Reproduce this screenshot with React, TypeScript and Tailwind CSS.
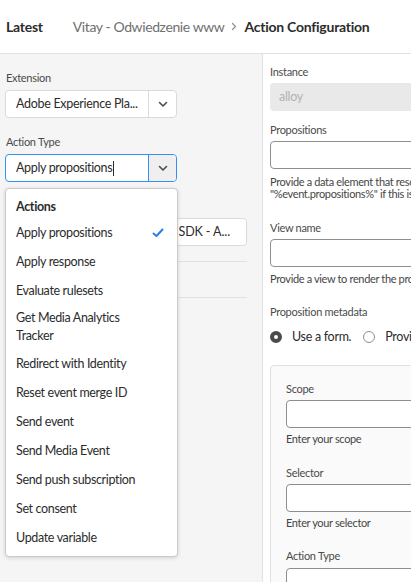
import React from "react";

const Chevron = () => (
  <svg width="10" height="7" viewBox="0 0 10 7" fill="none">
    <path d="M1.5 1.5 L5 5 L8.5 1.5" stroke="#4b4b4b" strokeWidth="1.6" strokeLinecap="round" strokeLinejoin="round" />
  </svg>
);

const Label = ({ children, className = "" }: { children: React.ReactNode; className?: string }) => (
  <div className={`text-[11px] leading-[16px] tracking-[-0.3px] text-[#4b4b4b] ${className}`}>{children}</div>
);

const Help = ({ children, className = "" }: { children: React.ReactNode; className?: string }) => (
  <div className={`text-[11px] leading-[12px] tracking-[-0.35px] text-[#464646] whitespace-nowrap ${className}`}>{children}</div>
);

const items = [
  "Apply propositions",
  "Apply response",
  "Evaluate rulesets",
  "Get Media Analytics Tracker",
  "Redirect with Identity",
  "Reset event merge ID",
  "Send event",
  "Send Media Event",
  "Send push subscription",
  "Set consent",
  "Update variable",
];

export default function App() {
  return (
    <div className="w-[411px] h-[582px] overflow-hidden bg-white font-['Lato','Noto_Sans',sans-serif] text-[#2c2c2c]">
      {/* Header */}
      <div className="h-[54px] border-b border-[#e1e1e1] flex items-center pl-[6px] whitespace-nowrap text-[14px]">
        <span className="font-bold tracking-[-0.25px] text-[#2c2c2c]">Latest</span>
        <span className="ml-[30px] tracking-[-0.4px] text-[#707070]">Vitay - Odwiedzenie www</span>
        <svg className="ml-[7px]" width="6" height="9" viewBox="0 0 6 9" fill="none">
          <path d="M1.5 1.5 L4.5 4.5 L1.5 7.5" stroke="#8e8e8e" strokeWidth="1.2" strokeLinecap="round" strokeLinejoin="round" />
        </svg>
        <span className="ml-[7px] font-bold tracking-[-0.25px] text-[#2c2c2c]">Action Configuration</span>
      </div>

      <div className="flex h-[528px]">
        {/* Left column */}
        <div className="relative w-[263px] shrink-0 bg-[#f5f5f5] border-r border-[#e1e1e1] pl-[5px] pr-[15px] pt-[16px]">
          <Label className="pl-[1px]">Extension</Label>
          <div className="mt-[4px] flex h-[28px] w-[172px] rounded-[4px] border border-[#dadada] bg-white">
            <div className="flex-1 flex items-center pl-[10px] text-[12.5px] tracking-[-0.3px] whitespace-nowrap overflow-hidden">
              Adobe Experience Pla...
            </div>
            <div className="w-[28px] flex items-center justify-center border-l border-[#dadada]">
              <Chevron />
            </div>
          </div>

          <Label className="mt-[16px] pl-[1px]">Action Type</Label>
          <div className="mt-[4px] flex h-[28px] w-[172px] rounded-[4px] border border-[#378ef0] bg-white overflow-hidden">
            <div className="flex-1 flex items-center pl-[10px] text-[12.5px] tracking-[-0.35px] whitespace-nowrap overflow-hidden">
              Apply propositions
              <span className="ml-[1px] inline-block w-[1px] h-[15px] bg-[#2c2c2c]" />
            </div>
            <div className="w-[28px] flex items-center justify-center border-l border-[#378ef0] bg-[#efefef]">
              <Chevron />
            </div>
          </div>

          <Label className="mt-[16px] pl-[1px]">Name</Label>
          <div className="mt-[4px] flex h-[28px] items-center justify-end rounded-[4px] border border-[#dadada] bg-white pr-[16px] text-[12.5px] tracking-[-0.1px] whitespace-nowrap overflow-hidden">
            Adobe Experience Platform Web SDK - A...
          </div>

          <div className="mt-[15px] border-t border-[#e1e1e1]" />
          <div className="mt-[35px] border-t border-[#e1e1e1]" />

          {/* Popover */}
          <div className="absolute left-[5px] top-[134px] w-[173px] rounded-[4px] border border-[#cacaca] bg-white shadow-[0_1px_4px_rgba(0,0,0,0.15)] pt-[4px] pb-[4px] text-[12.5px] tracking-[-0.35px]">
            <div className="pl-[10px] pt-[5px] pb-[2px] leading-[18px] font-bold text-[#2c2c2c]">Actions</div>
            {items.map((it, i) => (
              <div
                key={it}
                className={`flex items-start justify-between pl-[10px] pr-[13px] leading-[18px] ${
                  i === 3 ? "py-[4px]" : "py-[5.5px]"
                }`}
              >
                <span className={i === 3 ? "w-[120px]" : "whitespace-nowrap"}>{it}</span>
                {i === 0 && (
                  <svg className="mt-[4px]" width="12" height="10" viewBox="0 0 12 10" fill="none">
                    <path d="M1.5 5.5 L4.5 8 L10.5 1.5" stroke="#2680eb" strokeWidth="2" strokeLinecap="round" strokeLinejoin="round" />
                  </svg>
                )}
              </div>
            ))}
          </div>
        </div>

        {/* Right column */}
        <div className="flex-1 overflow-hidden pl-[7px] pt-[10px]">
          <div className="w-[320px]">
            <Label>Instance</Label>
            <div className="mt-[3px] h-[28px] rounded-[4px] bg-[#e9e9e9] flex items-center pl-[9px] text-[12.5px] tracking-[-0.3px] text-[#b3b3b3]">
              alloy
            </div>

            <Label className="mt-[11px]">Propositions</Label>
            <div className="mt-[3px] h-[28px] rounded-[4px] border border-[#8e8e8e] bg-white" />
            <Help className="mt-[7px]">
              <div>Provide a data element that resolves to an array of propositions.</div>
              <div>"%event.propositions%" if this is used in a rule.</div>
            </Help>

            <Label className="mt-[20px]">View name</Label>
            <div className="mt-[3px] h-[28px] rounded-[4px] border border-[#8e8e8e] bg-white" />
            <Help className="mt-[6px]">Provide a view to render the propositions for.</Help>

            <Label className="mt-[19px]">Proposition metadata</Label>
            <div className="mt-[7px] h-[20px] flex items-center text-[12.5px] tracking-[-0.3px] whitespace-nowrap">
              <span className="w-[12px] h-[12px] rounded-full border-[4px] border-[#4b4b4b] bg-white" />
              <span className="ml-[10px]">Use a form.</span>
              <span className="ml-[12px] w-[12px] h-[12px] rounded-full border-[1.5px] border-[#8e8e8e] bg-white" />
              <span className="ml-[10px]">Provide a data element.</span>
            </div>

            <div className="mt-[18px] h-[260px] rounded-[4px] border border-[#e1e1e1] bg-[#fafafa] pl-[15px] pt-[15px]">
              <Label>Scope</Label>
              <div className="mt-[3px] h-[28px] rounded-[4px] border border-[#8e8e8e] bg-white" />
              <Help className="mt-[5px]">Enter your scope</Help>

              <Label className="mt-[20px]">Selector</Label>
              <div className="mt-[3px] h-[28px] rounded-[4px] border border-[#8e8e8e] bg-white" />
              <Help className="mt-[5px]">Enter your selector</Help>

              <Label className="mt-[19px]">Action Type</Label>
              <div className="mt-[4px] h-[28px] rounded-[4px] border border-[#8e8e8e] bg-white" />
            </div>
          </div>
        </div>
      </div>
    </div>
  );
}
